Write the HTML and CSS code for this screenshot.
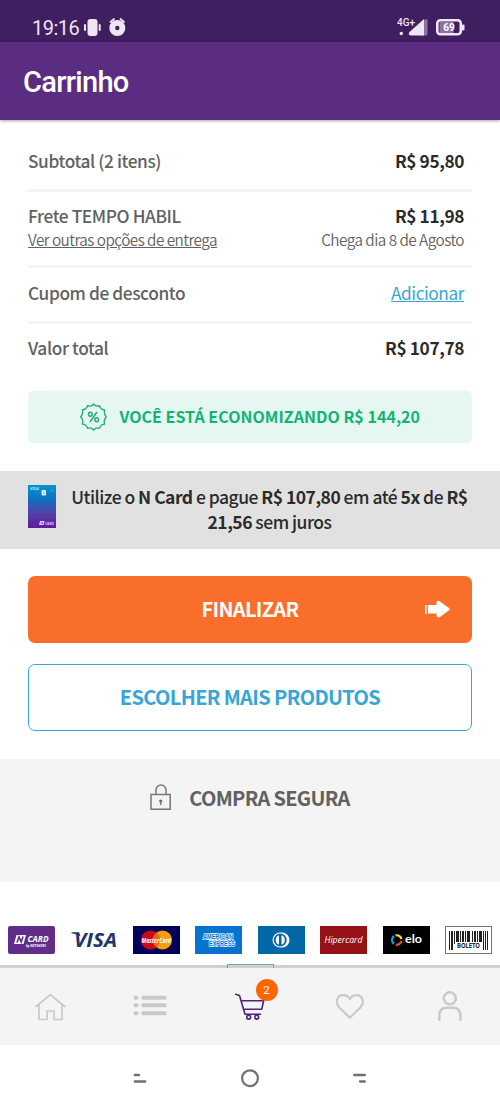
FILE: index.html
```html
<!DOCTYPE html>
<html lang="pt-BR">
<head>
<meta charset="utf-8">
<meta name="viewport" content="width=device-width">
<title>Carrinho</title>
<link rel="stylesheet" href="styles.css">
</head>
<body>
<div class="screen">
  <div class="status">
    <span class="clock">19:16</span>
    <svg class="status-left" width="43" height="20" viewBox="0 0 43 20">
      <g fill="#eee5f5"><rect x="3.500" y="1" width="10" height="17" rx="3"/><rect x="0" y="6" width="2" height="7" rx="1"/><rect x="14.700" y="6" width="2" height="7" rx="1"/><circle cx="33.300" cy="10" r="8"/></g>
      <path d="M26.500 4l3.500-3M36.500 1l3.500 3" stroke="#eee5f5" stroke-width="1.700" stroke-linecap="round"/>
      <circle cx="33.300" cy="10" r="2.200" fill="#401f60"/>
    </svg>
    <svg class="status-right" width="70" height="20" viewBox="0 0 70 20">
      <text x="0" y="8" class="net" textLength="18" lengthAdjust="spacingAndGlyphs">4G+</text>
      <circle cx="4.300" cy="15.500" r="1.700" fill="#eee5f5"/>
      <path d="M28 1.500q2.500-1.500 2.500 1.500v13q0 1.500-1.500 1.500h-4V4z" fill="#8a739f"/>
      <path d="M12.500 14L27 1v16.500H14q-3.500-.5-1.500-3.500z" fill="#eee5f5"/>
      <rect x="40.300" y="2.200" width="23.500" height="14" rx="3" fill="#401f60" stroke="#eee5f5" stroke-width="2.600"/>
      <path d="M42.500 4h14v11h-14z" fill="#8a739f"/>
      <rect x="65" y="6.500" width="2.500" height="6" rx="1" fill="#eee5f5"/>
      <text x="52" y="13" text-anchor="middle" class="battery">69</text>
    </svg>
  </div>
  <header class="header"><h1>Carrinho</h1></header>

  <main>
    <section class="summary">
      <div class="row"><span class="label">Subtotal (2 itens)</span><span class="price">R$ 95,80</span></div>
      <div class="row shipping">
        <div><div class="label">Frete TEMPO HABIL</div><a class="sub link">Ver outras opções de entrega</a></div>
        <div class="right"><div class="price">R$ 11,98</div><div class="sub">Chega dia 8 de Agosto</div></div>
      </div>
      <div class="row coupon"><span class="label">Cupom de desconto</span><a class="add link">Adicionar</a></div>
      <div class="row last"><span class="label">Valor total</span><span class="price">R$ 107,78</span></div>
      <div class="savings">
        <svg width="27" height="28" viewBox="-13.500 -14 27 28" fill="none" stroke="#1cae70" stroke-width="1.300">
          <path stroke-linejoin="round" d="M0-13Q2.400-9.800 5.900-11.300Q7.100-7.400 11.200-7.200Q9.900-3.500 12.800 0Q9.600 3 11.200 7.200Q7.200 7.400 5.900 11.300Q2.600 9.900 0 13Q-2.600 9.900-5.900 11.300Q-7.200 7.400-11.200 7.200Q-9.600 3-12.800 0Q-9.900-3.500-11.200-7.200Q-7.100-7.400-5.900-11.300Q-2.400-9.800 0-13Z"/>
          <path d="M3.500-5L-3.500 5" stroke-width="1.500"/><ellipse cx="-3.200" cy="-2.700" rx="1.800" ry="2" stroke-width="1.500"/><ellipse cx="3.200" cy="2.700" rx="1.800" ry="2" stroke-width="1.500"/>
        </svg>
        <span>VOCÊ ESTÁ ECONOMIZANDO R$ 144,20</span>
      </div>
    </section>

    <section class="promo">
      <svg width="28" height="43" viewBox="0 0 28 43">
        <defs><linearGradient id="card" x1="0" y1="0" x2="0" y2="1"><stop offset="0" stop-color="#0593cf"/><stop offset=".35" stop-color="#116fc0"/><stop offset=".65" stop-color="#5440a8"/><stop offset="1" stop-color="#5c1ca0"/></linearGradient></defs>
        <rect width="28" height="43" fill="url(#card)"/>
        <text x="2" y="5" class="mini-visa" textLength="9" lengthAdjust="spacingAndGlyphs">VISA</text>
        <rect x="13.500" y="5" width="4.500" height="5.500" rx=".8" fill="#d9e7ee"/><path d="M15 8h2M23.500 4l1.500 1.500-1.500 1" stroke="#54b9df" fill="none" stroke-width=".7"/>
        <path d="M12 36h4.500l-1 4h-4.500z" fill="#ddc8f5"/><path d="M13 39l1-2 1 2" stroke="#5c2ca0" fill="none" stroke-width=".6"/>
        <text x="17" y="39.500" class="mini-card" textLength="9" lengthAdjust="spacingAndGlyphs">CARD</text>
      </svg>
      <p>Utilize o <b>N Card</b> e pague <b>R$ 107,80</b> em até <b>5x</b> de <b>R$</b><br><b>21,56</b> sem juros</p>
    </section>

    <section class="actions">
      <button class="btn primary"><span class="finish">FINALIZAR</span>
        <svg class="arrow" width="26" height="18" viewBox="0 0 26 18" fill="#fff"><path d="M0 5h1.500v9H0zM2.800 5h8.700V2q1-2 3.500-.5l9 6.500q1.300 1.200 0 2.300L15 17q-2.500 1.200-3.500-1v-2.500H2.800z"/></svg>
      </button>
      <button class="btn outline"><span>ESCOLHER MAIS PRODUTOS</span></button>
    </section>

    <section class="secure">
      <svg width="22" height="27" viewBox="0 0 22 27" fill="none" stroke="#777" stroke-width="1.500"><path d="M1 10.500h19.200v14.700H1zM6 10.500V6a5 5 0 0 1 10 0v4.500"/><circle cx="10.700" cy="17" r="1.600" fill="#666" stroke="none"/><path d="M10.700 17v4"/></svg>
      <span>COMPRA SEGURA</span>
    </section>

    <section class="payments">
      <svg viewBox="0 0 47 28"><rect width="47" height="28" rx="2" fill="#612d88"/><path d="M8.500 9h9.500l-2.500 9h-9.500z" fill="#fff"/><path d="M9 16.500l2-5.500 2.200 5 1.800-5.500" fill="none" stroke="#612d88" stroke-width="1.600"/><text x="19.500" y="16.300" class="ncard" textLength="21" lengthAdjust="spacingAndGlyphs">CARD</text><text x="18" y="21" class="tiny" textLength="20" lengthAdjust="spacingAndGlyphs">by NETSHOES</text></svg>
      <svg viewBox="0 0 47 28"><text x="4" y="21" class="visa" textLength="43" lengthAdjust="spacingAndGlyphs">VISA</text><path d="M1.500 6.300h7.500l1.500 4Q6 8 1.500 7.300z" fill="#23336e"/></svg>
      <svg viewBox="0 0 47 28"><rect width="47" height="28" fill="#02025c"/><circle cx="17.500" cy="14" r="9.500" fill="#cf0815"/><circle cx="29.500" cy="14" r="9.500" fill="#f99e08"/><path d="M23.500 6.600a9.500 9.500 0 0 1 0 14.800a9.500 9.500 0 0 1 0-14.800" fill="#e76512"/><text x="8.500" y="17" class="master" textLength="29.500" lengthAdjust="spacingAndGlyphs">MasterCard</text></svg>
      <svg viewBox="0 0 47 28"><rect width="47" height="28" fill="#0674cf"/><text x="8" y="13.300" class="amex" textLength="30" lengthAdjust="spacingAndGlyphs">AMERICAN</text><text x="14" y="20" class="amex" textLength="26" lengthAdjust="spacingAndGlyphs">EXPRESS</text></svg>
      <svg viewBox="0 0 47 28"><rect width="47" height="28" fill="#0467a6"/><path d="M22 6.500h2a7.500 7.500 0 0 1 0 15h-2a7.500 7.500 0 0 1 0-15" fill="#fff"/><circle cx="22.200" cy="14" r="6.500" fill="#0467a6"/><path d="M21 9.300a5 5 0 0 0 0 9.400zM23.500 9.300a5 5 0 0 1 0 9.400z" fill="#fff"/></svg>
      <svg viewBox="0 0 47 28"><rect width="47" height="28" fill="#971216"/><text x="4.500" y="16.500" class="hiper" textLength="38" lengthAdjust="spacingAndGlyphs">Hipercard</text></svg>
      <svg viewBox="0 0 47 28"><rect width="47" height="28" fill="#000"/><g fill="none" stroke-width="2.200"><path d="M12.500 9.500a4.700 4.700 0 0 1 6 3.500" stroke="#f6df16"/><path d="M11 10a4.900 4.900 0 0 0 0 7.800" stroke="#14a2db"/><path d="M12.800 18.700a4.800 4.800 0 0 0 5.700-3.700" stroke="#e64b2a"/></g><text x="22" y="17.200" class="elo" textLength="17" lengthAdjust="spacingAndGlyphs">elo</text></svg>
      <svg viewBox="0 0 47 28"><rect x=".5" y=".5" width="46" height="27" fill="#fff" stroke="#777"/><g fill="#24201f"><path d="M4 5h1v19H4zM6 5h2v19H6zM9 5h1v13H9zM11 5h3v11h-3zM15 5h1v11h-1zM17 5h2v11h-2zM20 5h1v11h-1zM22 5h3v11h-3zM27 5h1v11h-1zM29 5h2v11h-2zM32 5h1v11h-1zM34 5h3v11h-3zM38 5h1v19h-1zM40 5h1v19h-1zM42 5h1v19h-1z"/></g><rect x="10.500" y="16" width="27" height="8" fill="#fff"/><text x="12" y="22" class="boleto" textLength="23" lengthAdjust="spacingAndGlyphs">BOLETO</text></svg>
    </section>
  </main>

  <nav class="tabs">
    <span class="seal"></span>
    <a><svg width="34" height="34" viewBox="0 0 34 34" fill="none" stroke="#c9c9c9" stroke-width="1.700"><path d="M2.500 19L17.300 6.500 32.300 19M6 16.500v15h8v-8.500h7v8.500h8v-15"/></svg></a>
    <a><svg width="34" height="34" viewBox="0 0 34 34" stroke="#c9c9c9" stroke-width="4" stroke-linecap="round"><path d="M2.500 9.700h1M10.200 9.700h21.500M2.500 17.300h1M10.200 17.300h21.500M2.500 25.300h1M10.200 25.300h21.500"/></svg></a>
    <a class="cart"><svg width="34" height="34" viewBox="0 0 34 34" fill="none" stroke="#51247d" stroke-width="1.600" stroke-linecap="round" stroke-linejoin="round"><path d="M2.700 6.200l3.800 1.300L12 26.200h15.500M8.200 12.700h22.500l-2 8.600H11"/><circle cx="15.700" cy="29.200" r="1.900"/><circle cx="23.700" cy="29.200" r="1.900"/></svg><span class="badge">2</span></a>
    <a><svg width="34" height="34" viewBox="0 0 34 34" fill="none" stroke="#c9c9c9" stroke-width="2.200" stroke-linejoin="round"><path d="M16.800 29.700L6.200 19.500C1.800 14.800 4 7.200 9.800 7.200Q14.700 7.200 16.800 11Q18.900 7.200 23.700 7.200C29.600 7.200 31.800 14.800 27.400 19.500z"/></svg></a>
    <a><svg width="34" height="34" viewBox="0 0 34 34" fill="none" stroke="#c9c9c9" stroke-width="2.500" stroke-linecap="round"><circle cx="16.800" cy="10.300" r="6"/><path d="M6.300 31.800V28q0-8.300 7.500-8.300h6.200q7.500 0 7.500 8.300v3.800"/></svg></a>
  </nav>
  <div class="system">
    <svg width="16" height="12" viewBox="0 0 16 12" stroke="#707070" stroke-width="2.300" stroke-linecap="round"><path d="M2.700 3h4.300M2.700 9.500h10.600"/></svg>
    <svg width="20" height="20" viewBox="0 0 20 20" fill="none" stroke="#707070" stroke-width="2.200"><circle cx="10" cy="10.200" r="7.900"/></svg>
    <svg width="16" height="12" viewBox="0 0 16 12" stroke="#707070" stroke-width="2.300" stroke-linecap="round"><path d="M2.200 3h10.600M8 9.500h4.800"/></svg>
  </div>
</div>
</body>
</html>
```
FILE: styles.css
```css
* { box-sizing: border-box; }
body { margin: 0; background: #fff; font-family: "Noto Sans CJK SC", "Noto Sans", sans-serif; color: #616161; }
p, h1 { margin: 0; }
svg { display: block; flex: none; }
.screen { width: 500px; height: 1111px; display: flex; flex-direction: column; overflow: hidden; }
.status { height: 42px; flex: none; background: #401f60; display: flex; align-items: flex-start; padding: 18px 33px 0 32px; }
.clock { font: 400 20px/20px Roboto, sans-serif; color: #eee5f5; width: 52px; letter-spacing: -.5px; }
.status-right { margin-left: auto; }
.net { font: 500 10px Roboto, sans-serif; fill: #eee5f5; }
.battery { font: 700 10px Roboto, sans-serif; fill: #fff; }
.header { height: 78px; flex: none; background: #5b2d82; padding: 0 23px; display: flex; align-items: center; box-shadow: 0 1px 3px rgba(0,0,0,.35); z-index: 1; }
h1 { font: 500 29px/38px Roboto, sans-serif; color: #fff; letter-spacing: -.7px; padding-top: 1px; }
main { height: 845px; flex: none; overflow: hidden; }

.summary { padding: 14px 28px 28px; }
.row { display: flex; justify-content: space-between; align-items: center; height: 56px; border-bottom: 3px solid #f4f4f4; padding-right: 8px; font-size: 17.300px; line-height: 24px; letter-spacing: -.4px; }
.row:first-child { height: 57.500px; }
.row.shipping { height: 76.500px; padding-bottom: 2px; }
.row.coupon { padding-bottom: 3px; }
.row.last { border: 0; height: 53px; padding-bottom: 5px; }
.label { font-weight: 500; color: #616161; }
.price { font-weight: 700; color: #2b2b2b; }
.right { text-align: right; }
.sub { display: block; font-size: 15.300px; line-height: 22px; font-weight: 350; letter-spacing: -.53px; color: #616161; }
.link { text-decoration: underline; }
.add { color: #38a5d9; font-weight: 400; letter-spacing: -.45px; }
.savings { margin-top: 14px; height: 52px; border-radius: 5px; background: #e5f7f0; color: #12b474; display: flex; align-items: center; justify-content: center; gap: 12.500px; font-size: 16px; line-height: 24px; font-weight: 700; letter-spacing: .03px; }
.savings span { padding-bottom: 2px; }
.promo { height: 78px; background: #e1e1e1; padding: 0 28px; display: flex; align-items: center; gap: 11px; color: #2b2b2b; }
.promo svg { margin-top: -7px; }
.promo p { flex: 1; text-align: center; white-space: nowrap; font-size: 17.500px; font-weight: 500; line-height: 25px; letter-spacing: -.52px; padding-bottom: 2px; }
.mini-visa { font: italic 700 4px "Noto Sans", sans-serif; fill: #a5e1f5; }
.mini-card { font: 700 3.500px "Noto Sans", sans-serif; fill: #ddc8f5; }
.actions { padding: 27px 28px 28px; display: grid; gap: 21.500px; }
.btn { position: relative; height: 66.500px; border: 0; border-radius: 7px; font: 700 20px/26px "Noto Sans CJK SC", sans-serif; letter-spacing: -.65px; padding: 0 0 1px; }
.primary { background: #fa6e2b; color: #fff; }
.arrow { position: absolute; right: 21px; top: 24px; }
.outline { background: #fff; border: 1.500px solid #38a5d9; color: #38a5d9; }
.secure { height: 123px; background: #f4f4f4; display: flex; justify-content: center; padding-top: 25px; gap: 17px; font-size: 20px; font-weight: 700; line-height: 27px; letter-spacing: -.7px; }
.payments { display: grid; grid-template-columns: repeat(8, 47px); justify-content: space-between; padding: 44.500px 8px 0; height: 83.500px; }
.payments svg { width: 47px; height: 28px; }
.ncard { font: italic 700 8px "Noto Sans", sans-serif; fill: #fff; }
.tiny { font: italic 700 3px "Noto Sans", sans-serif; fill: #fff; }
.visa { font: italic 700 20px "Open Sans", sans-serif; fill: #23336e; }
.master { font: italic 700 6.500px "Noto Sans", sans-serif; fill: #fff; }
.amex { font: 700 6.800px "Liberation Sans", sans-serif; fill: #0674cf; stroke: #fff; stroke-width: 1.300px; paint-order: stroke; }
.hiper { font: italic 500 8.500px "Open Sans", sans-serif; fill: #fff; }
.elo { font: 700 12px Lato, sans-serif; fill: #fff; }
.boleto { font: 700 6.500px "Noto Sans", sans-serif; fill: #222; }

.tabs { position: relative; height: 80px; flex: none; background: #f4f4f4; border-top: 3px solid #d0d0d0; display: grid; grid-template-columns: repeat(5, 1fr); justify-items: center; padding-top: 20px; }
.seal { position: absolute; left: 227px; top: -4px; width: 47px; height: 4px; border: 1px solid #71aaa4; border-bottom: 0; }
.cart { position: relative; }
.badge { position: absolute; left: 22.500px; top: -9.500px; width: 22px; height: 22px; border-radius: 50%; background: #ff6500; color: #fff; font: 400 11.500px/22px Roboto, sans-serif; text-align: center; }
.system { flex: 1; display: flex; align-items: center; justify-content: space-between; padding: 0 132px; }
```
